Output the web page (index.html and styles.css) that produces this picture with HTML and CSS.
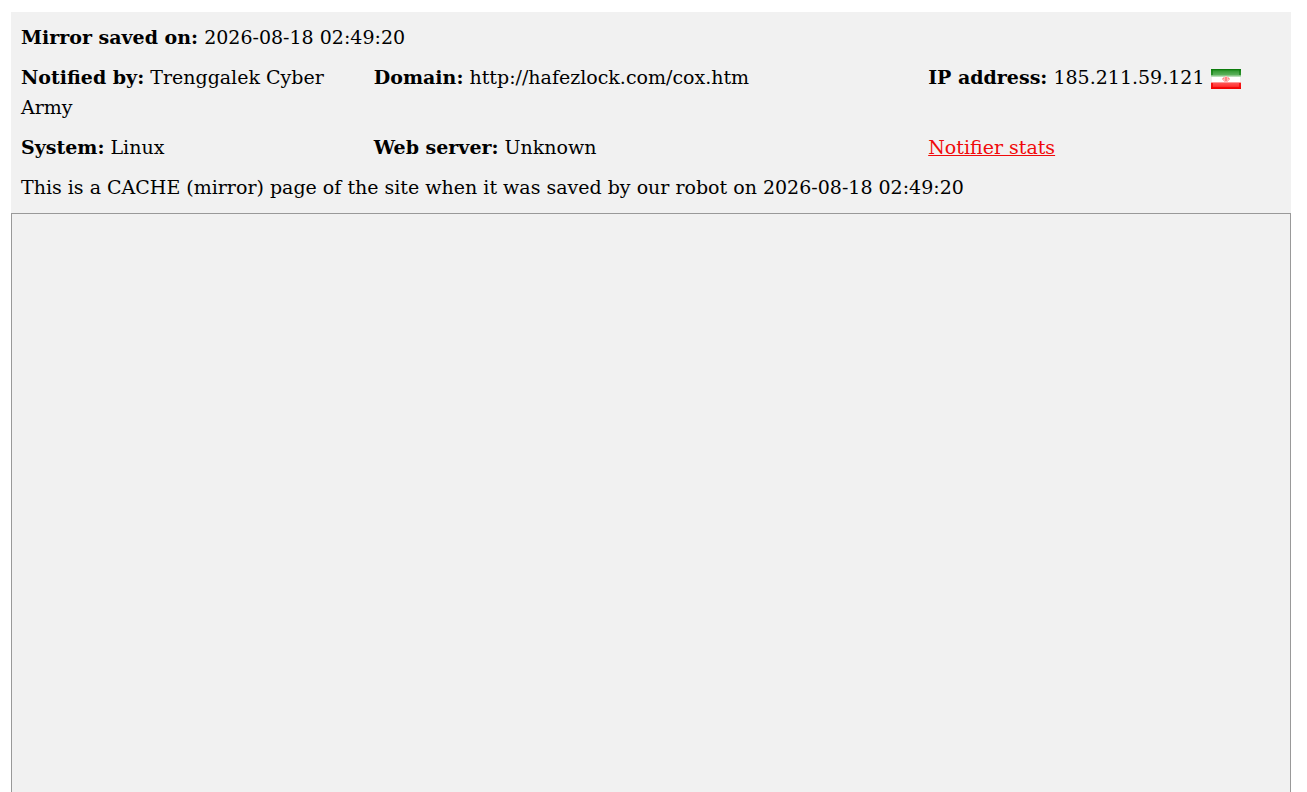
FILE: index.html
```html
<!DOCTYPE html>
<html lang="en">
<head>
<meta charset="utf-8">
<title>Mirror</title>
<link rel="stylesheet" href="styles.css">
</head>
<body class="page">
<header class="info">
  <p class="info-row"><strong>Mirror saved on:</strong> 2026-08-18 02:49:20</p>
  <div class="info-grid">
    <p class="info-cell"><strong>Notified by:</strong> Trenggalek Cyber Army</p>
    <p class="info-cell"><strong>Domain:</strong> http://hafezlock.com/cox.htm</p>
    <p class="info-cell"><strong>IP address:</strong> 185.211.59.121
      <svg class="flag" viewBox="0 0 30 20" role="img" aria-label="Iran">
        <defs>
          <linearGradient id="green" x2="0" y2="1"><stop offset="0" stop-color="#0a7a0a"/><stop offset=".3" stop-color="#3a9e3a"/><stop offset=".7" stop-color="#5ab05a"/><stop offset="1" stop-color="#d0ead0"/></linearGradient>
          <linearGradient id="red" x2="0" y2="1"><stop offset="0" stop-color="#ffc0c0"/><stop offset=".2" stop-color="#ff5050"/><stop offset=".6" stop-color="#ff3434"/><stop offset="1" stop-color="#f00000"/></linearGradient>
        </defs>
        <path fill="#fff" d="M0 0h30v20H0z"/>
        <path fill="url(#green)" d="M0 0h30v8H0z"/>
        <path fill="url(#red)" d="M0 13h30v7H0z"/>
        <path fill="#087808" fill-opacity=".55" d="M0 0h2v6H0zM28 0h2v6h-2zM2 0h26v1H2z"/>
        <path fill="#f00000" fill-opacity=".7" d="M0 14h2v6H0zM28 14h2v6h-2zM2 18h26v2H2z"/>
        <path fill="#e0e0e0" fill-opacity=".5" d="M0 8h1v5H0zM29 8h1v5h-1z"/>
        <path fill="#fbb" d="M14 7h2v1h2v1h1v2h-1v1h-1v1h-4v-1h-1v-1h-1V9h1V8h2z"/>
        <path fill="#f88" d="M14 8h2v4h-2zM12 9h1v1h-1zM17 9h1v1h-1z"/>
      </svg>
    </p>
    <p class="info-cell"><strong>System:</strong> Linux</p>
    <p class="info-cell"><strong>Web server:</strong> Unknown</p>
    <p class="info-cell"><a class="stats-link" href="#stats">Notifier stats</a></p>
  </div>
  <p class="info-row">This is a CACHE (mirror) page of the site when it was saved by our robot on 2026-08-18 02:49:20</p>
</header>
<main class="mirror"></main>
</body>
</html>
```
FILE: styles.css
```css
* {
  box-sizing: border-box;
}

.page {
  display: flex;
  flex-direction: column;
  min-height: 100vh;
  margin: 0;
  padding: 12px 16px 0 11px;
  background: #fff;
  color: #000;
  font-family: "DejaVu Serif", serif;
  font-size: 19px;
  line-height: 30px;
}

.info {
  display: flex;
  flex-direction: column;
  gap: 10px;
  padding: 10px 10px 11px;
  background: #f1f1f1;
}

.info-row,
.info-cell {
  margin: 0;
}

.info-grid {
  display: grid;
  grid-template-columns: 28% 44% 28%;
  row-gap: 10px;
}

.flag {
  width: 30px;
  height: 20px;
  vertical-align: middle;
}

.stats-link {
  color: #f00a0a;
}

.mirror {
  flex: 1;
  border: 1px solid #999;
  border-bottom: 0;
  background: #f1f1f1;
}
```
